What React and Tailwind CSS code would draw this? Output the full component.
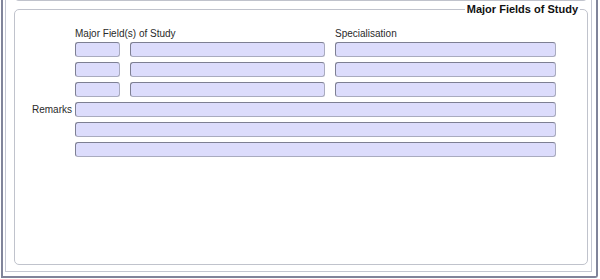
import React from "react";

function Field({ w }) {
  return (
    <div
      className={`${w} h-[15px] shrink-0 rounded-[3px] border border-t-[#7d7f93] border-l-[#7d7f93] border-r-[#a9abbf] border-b-[#a9abbf] bg-[#dcdcfc]`}
    />
  );
}

function TripleRow() {
  return (
    <div className="flex h-[15px] items-center">
      <div className="w-[60px] shrink-0" />
      <Field w="w-[45px]" />
      <div className="w-[10px] shrink-0" />
      <Field w="w-[195px]" />
      <div className="w-[10px] shrink-0" />
      <Field w="w-[221px]" />
    </div>
  );
}

function WideRow({ label }) {
  return (
    <div className="flex h-[15px] items-center">
      <div className="w-[60px] shrink-0 pr-[3px] text-right text-[10px] leading-[12px] text-[#2a2a2a]">
        {label}
      </div>
      <Field w="w-[481px]" />
    </div>
  );
}

export default function App() {
  return (
    <div
      className="w-[600px] h-[279px] overflow-hidden bg-white flex flex-col"
      style={{ fontFamily: '"Liberation Sans", Arial, sans-serif' }}
    >
      <div className="ml-[1px] mb-[1px] w-[597px] flex-1 border-l-2 border-r-2 border-b-2 border-[#80849a] rounded-br-[3px] flex flex-col">
        <div className="ml-[2px] mr-[4px] mb-[4px] flex-1 border-l border-r border-b border-[#c4c7d2] flex flex-col pl-[8px] pr-[3px] pb-[6px]">
          <div className="mt-[-6px] h-[7px] shrink-0 rounded-b-[5px] border-l border-r border-b border-[#c0c3cc]" />
          <fieldset className="mt-[2px] flex-1 rounded-[5px] border border-[#c0c3cc] min-w-0">
            <legend className="ml-auto mr-[7px] px-[2px] text-[11px] font-bold leading-[13px] text-[#111]">
              Major Fields of Study
            </legend>
            <div className="flex flex-col pt-[11px]">
              <div className="flex h-[13px] items-end text-[10px] leading-[12px] text-[#2a2a2a]">
                <div className="w-[60px] shrink-0" />
                <div className="w-[260px] shrink-0">Major Field(s) of Study</div>
                <div>Specialisation</div>
              </div>
              <div className="mt-[2px] flex flex-col gap-[5px]">
                <TripleRow />
                <TripleRow />
                <TripleRow />
                <WideRow label="Remarks" />
                <WideRow label="" />
                <WideRow label="" />
              </div>
            </div>
          </fieldset>
        </div>
      </div>
    </div>
  );
}
